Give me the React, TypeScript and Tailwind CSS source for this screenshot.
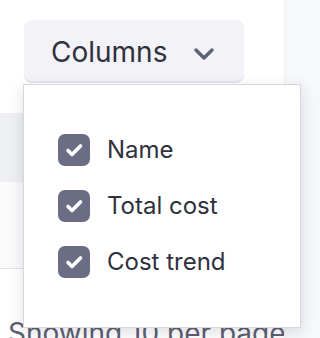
import { useState } from 'react'

type Column = { key: string; label: string }

const columns: Column[] = [
  { key: 'name', label: 'Name' },
  { key: 'total', label: 'Total cost' },
  { key: 'trend', label: 'Cost trend' },
]

const Chevron = () => (
  <svg width="22" height="14" viewBox="0 0 22 14" fill="none">
    <polyline
      points="3,3 11,11 19,3"
      stroke="#5f6178"
      strokeWidth="3.5"
      strokeLinecap="round"
      strokeLinejoin="round"
    />
  </svg>
)

const CheckBox = ({ checked }: { checked: boolean }) => (
  <span className="w-8 h-8 rounded-[7px] bg-[#6b6d85] flex items-center justify-center shrink-0">
    {checked && (
      <svg width="32" height="32" viewBox="0 0 32 32" fill="none">
        <polyline
          points="10,16.5 14,20.5 22.5,12"
          stroke="white"
          strokeWidth="3.6"
          strokeLinecap="round"
          strokeLinejoin="round"
        />
      </svg>
    )}
  </span>
)

export default function App() {
  const [checked, setChecked] = useState<Record<string, boolean>>({
    name: true,
    total: true,
    trend: true,
  })

  return (
    <div
      className="relative w-[320px] h-[338px] overflow-hidden bg-white flex"
      style={{ fontFamily: 'Inter, "Noto Sans", sans-serif' }}
    >
      {/* Main area */}
      <div className="w-[284px] flex flex-col">
        <div className="h-[113px] shrink-0 pt-5 pl-6">
          <button className="w-[220px] h-[63px] rounded-lg bg-[#f2f2f7] shadow-[inset_0_-2px_0_#e6e6ee] flex items-center pl-[27px] text-[28px] leading-[34px] text-[#2f3040]">
            <span>Columns</span>
            <span className="ml-[26px] mt-1">
              <Chevron />
            </span>
          </button>
        </div>

        {/* Table header band */}
        <div className="h-[69px] shrink-0 bg-[#eff0f3]"></div>

        {/* Rows */}
        <div className="h-[87px] shrink-0 border-b border-[#e1e2e8] bg-[#fafafb]"></div>

        {/* Footer */}
        <div className="shrink-0 pt-[48px] pl-2 text-[28px] leading-[32px] text-[#5c5e72] whitespace-nowrap">
          Showing 10 per page
        </div>
      </div>

      {/* Side panel */}
      <div className="flex-1 bg-[#f7f8fa] border-l border-[#eeeff3]"></div>

      {/* Columns menu */}
      <div className="absolute left-[23px] top-[84px] w-[278px] h-[244px] bg-white border border-[#d6d7de] shadow-[0_4px_14px_rgba(30,30,50,0.14)] pt-[49px] pl-[34px] flex flex-col gap-6">
        {columns.map((c) => (
          <div
            key={c.key}
            className="h-8 flex items-center gap-[17px] text-[24px] leading-8 text-[#2f3040] cursor-pointer"
            onClick={() => setChecked({ ...checked, [c.key]: !checked[c.key] })}
          >
            <CheckBox checked={checked[c.key]} />
            <span>{c.label}</span>
          </div>
        ))}
      </div>
    </div>
  )
}
